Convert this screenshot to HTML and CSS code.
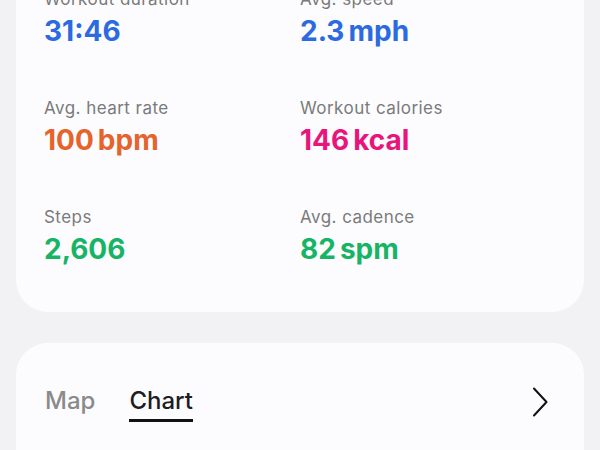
FILE: index.html
```html
<!DOCTYPE html>
<html>
<head>
<meta charset="utf-8">
<link rel="stylesheet" href="styles.css">
</head>
<body>
<div class="page">
  <section class="card stats">
    <div class="stat"><div class="label">Workout duration</div><div class="value blue">31:46</div></div>
    <div class="stat"><div class="label">Avg. speed</div><div class="value blue">2.3<span class="sp"></span>mph</div></div>
    <div class="stat"><div class="label">Avg. heart rate</div><div class="value orange">100<span class="sp"></span>bpm</div></div>
    <div class="stat"><div class="label">Workout calories</div><div class="value pink">146<span class="sp"></span>kcal</div></div>
    <div class="stat"><div class="label">Steps</div><div class="value green">2,606</div></div>
    <div class="stat"><div class="label">Avg. cadence</div><div class="value green">82<span class="sp"></span>spm</div></div>
  </section>
  <section class="card tabs-card">
    <div class="tabs">
      <span class="tab">Map</span>
      <span class="tab active">Chart</span>
      <svg class="chev" width="16" height="30" viewBox="0 0 16 30"><path d="M2 1.5 L14.5 15 L2 28.5" fill="none" stroke="#111" stroke-width="2" stroke-linecap="round" stroke-linejoin="round"/></svg>
    </div>
  </section>
</div>
</body>
</html>
```
FILE: styles.css
```css
html, body {
  margin: 0;
  padding: 0;
  background: #f2f2f4;
  font-family: Inter, "Noto Sans", "Liberation Sans", sans-serif;
  overflow: hidden;
}
.page {
  width: 600px;
  height: 450px;
  overflow: hidden;
}
.card {
  background: #fcfcfe;
  border-radius: 32px;
  margin: 0 16px;
}
.stats {
  margin-top: -31px;
  padding: 20px 28px 47px 28px;
  display: grid;
  grid-template-columns: 256px 1fr;
  row-gap: 51px;
}
.stat {
  display: flex;
  flex-direction: column;
  gap: 6px;
}
.label {
  font-size: 17px;
  line-height: 20px;
  color: #7a7a7a;
  letter-spacing: 0.45px;
}
.value {
  font-size: 28px;
  line-height: 32px;
  font-weight: 700;
  letter-spacing: 0;
}
.sp { display: inline-block; width: 4px; }
.blue { color: #2c6ae0; }
.orange { color: #e5632c; }
.pink { color: #e8157c; }
.green { color: #17b466; }
.tabs-card {
  margin-top: 31px;
  height: 140px;
}
.tabs {
  display: flex;
  align-items: flex-start;
  padding: 43px 36px 0 29px;
}
.tab {
  font-size: 24px;
  line-height: 30px;
  font-weight: 500;
  color: #8a8a8a;
  padding-bottom: 3px;
  border-bottom: 3px solid transparent;
  margin-right: 34px;
}
.tab.active {
  color: #1e1e1e;
  border-bottom-color: #111;
}
.chev {
  margin-left: auto;
  margin-top: 1px;
}
```
